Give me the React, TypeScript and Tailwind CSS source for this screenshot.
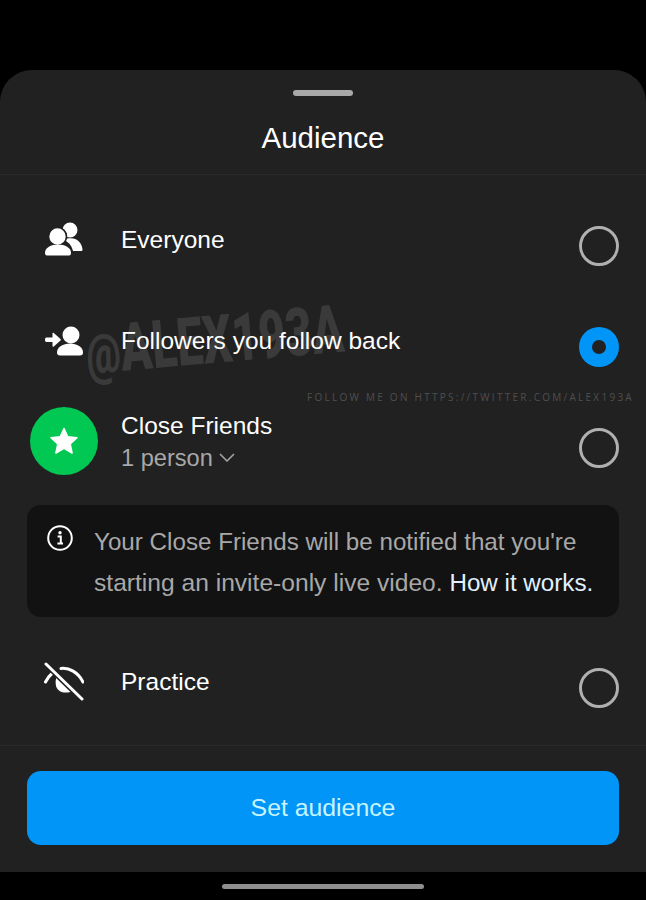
import React from "react";

function RadioMark({ selected }: { selected?: boolean }) {
  if (selected) {
    return (
      <div className="w-10 h-10 rounded-full bg-[#0095f6] flex items-center justify-center shrink-0">
        <div className="w-[14px] h-[14px] rounded-full bg-[#212121]" />
      </div>
    );
  }
  return <div className="w-10 h-10 rounded-full border-[3px] border-[#b0b0b0] shrink-0" />;
}

function EveryoneIcon() {
  return (
    <svg width="38" height="34" viewBox="0 0 38 34" fill="white" className="-translate-y-px">
      <circle cx="25" cy="8" r="7.5" />
      <path d="M22 16.5 C28 15.5 33 17 35.5 21.5 C37.5 25 38 28.5 37 29 L28 29 C27 25 25 21 20 18.5Z" />
      <circle cx="12.5" cy="14.5" r="9" fill="white" stroke="#212121" strokeWidth="1.6" />
      <path d="M0 31 C0 25.5 6 22.5 13 22.5 C20 22.5 26 25.5 26 31 C26 33 25 33.5 23 33.5 L3 33.5 C1 33.5 0 33 0 31 Z" />
    </svg>
  );
}

function FollowBackIcon() {
  return (
    <svg width="38" height="30" viewBox="0 0 38 30" fill="white">
      <circle cx="26" cy="9" r="8.5" />
      <path d="M12 26.5 C12 21 18 17.5 25 17.5 C32 17.5 38 21 38 26.5 C38 28.5 37 29.5 35 29.5 L15 29.5 C13 29.5 12 28.5 12 26.5 Z" />
      <path d="M1.5 11.5 H7.5 V7.5 C7.5 6.8 8.2 6.5 8.8 7 L15.5 13 C16 13.5 16 14 15.5 14.5 L8.8 20.5 C8.2 21 7.5 20.7 7.5 20 V16 H1.5 C0.5 16 0 15.2 0 13.8 C0 12.4 0.5 11.5 1.5 11.5 Z" />
    </svg>
  );
}

function EyeOffIcon() {
  return (
    <svg width="40" height="40" viewBox="0 0 40 40" fill="none" stroke="white" strokeWidth="3" strokeLinecap="round" className="-translate-y-px">
      <path d="M1.5 21 C3 18 5 15 8 12.5" />
      <path d="M17 7.5 C25 6.5 34 11 39 21" />
      <path d="M13 14 L29 30 C22 33 14 32 12 25 C11 21 12 17 13 14 Z" fill="white" stroke="none" />
      <path d="M2 3 L38 38" stroke="#212121" strokeWidth="6" />
      <path d="M2 3 L38 38" strokeWidth="3" />
    </svg>
  );
}

function InfoIcon() {
  return (
    <svg width="26" height="26" viewBox="0 0 26 26" fill="none" stroke="white">
      <circle cx="13" cy="13" r="11.8" strokeWidth="2" />
      <circle cx="13" cy="7.8" r="1.7" fill="white" stroke="none" />
      <path d="M10.6 11.6 H13.8 V18 M10.4 18.6 H16" strokeWidth="2" />
    </svg>
  );
}

function Row({ icon, children, selected }: { icon: React.ReactNode; children: React.ReactNode; selected?: boolean }) {
  return (
    <div className="h-[101px] flex items-center pr-[27px]">
      <div className="w-[121px] shrink-0 flex pl-[45px] -translate-y-[6px]">{icon}</div>
      <div className="flex-1 text-white text-[24.5px] leading-8 -translate-y-[6px]">{children}</div>
      <RadioMark selected={selected} />
    </div>
  );
}

export default function App() {
  return (
    <div className="w-[646px] h-[900px] bg-black flex flex-col relative overflow-hidden font-['Liberation_Sans',sans-serif]">
      {/* watermark stays first in the DOM so the rows paint over it */}
      <div className="absolute left-[86px] top-[316px] text-[#3a3a3a] text-[67px] leading-[70px] font-black origin-left scale-x-[0.69] -rotate-[5deg] whitespace-nowrap font-['Roboto',sans-serif]">
        <span className="text-[56px]">@</span>ALEX193A
      </div>

      <div className="mt-[70px] h-[802px] bg-[#212121] rounded-t-[32px] flex flex-col">
        <div className="h-[105px] shrink-0 border-b border-[#2a2a2a] flex flex-col items-center pt-[20px]">
          <div className="w-[60px] h-[6px] rounded-full bg-[#a8a8a8]" />
          <div className="mt-[22px] text-white text-[29.5px] leading-[40px]">Audience</div>
        </div>

        <div className="flex-1 pt-[20px]">
          <Row icon={<EveryoneIcon />}>Everyone</Row>
          <Row icon={<FollowBackIcon />} selected>
            Followers you follow back
          </Row>
          <div className="h-[101px] flex items-center pr-[27px]">
            <div className="w-[121px] shrink-0 pl-[30px] -translate-y-[7px]">
              <div className="w-[68px] h-[68px] rounded-full bg-[#00c853] flex items-center justify-center">
                <svg width="28" height="28" viewBox="0 0 28 28" fill="white">
                  <path
                    d="M14 1.5 L17.8 9.8 L27 10.8 L20.2 17 L22.1 26 L14 21.4 L5.9 26 L7.8 17 L1 10.8 L10.2 9.8 Z"
                    stroke="white"
                    strokeWidth="1.5"
                    strokeLinejoin="round"
                  />
                </svg>
              </div>
            </div>
            <div className="flex-1 -translate-y-[6px]">
              <div className="text-white text-[24.5px] leading-8">Close Friends</div>
              <div className="flex items-center gap-[6px] text-[#a8a8a8] text-[23.6px] leading-8">
                1 person
                <svg width="16" height="9" viewBox="0 0 16 9" fill="none" stroke="#a8a8a8" strokeWidth="1.5">
                  <path d="M1 1 L8 8 L15 1" />
                </svg>
              </div>
            </div>
            <RadioMark />
          </div>

          <div className="mx-[27px] mt-[7px] h-[112px] rounded-[14px] bg-[#121212] flex pl-[20px] pr-[12px] pt-[20px]">
            <div className="w-[47px] shrink-0">
              <InfoIcon />
            </div>
            <div className="text-[#a8a8a8] text-[24.6px] leading-[41px] -mt-[4px] whitespace-nowrap">
              <span className="text-[24.2px]">Your Close Friends will be notified that you're</span>
              <br />
              starting an invite-only live video. <span className="text-[#e0f1ff] text-[24.2px]">How it works.</span>
            </div>
          </div>

          <div className="mt-[20px]">
            <Row icon={<div className="-ml-[1px]"><EyeOffIcon /></div>}>Practice</Row>
          </div>
        </div>

        <div className="h-[127px] shrink-0 border-t border-[#2a2a2a] px-[27px] pt-[25px]">
          <button className="w-full h-[74px] rounded-[14px] bg-[#0095f6] text-[#c8f4ff] text-[24.8px]">
            Set audience
          </button>
        </div>
      </div>

      <div className="flex-1 flex items-center justify-center">
        <div className="w-[202px] h-[5px] rounded-full bg-[#8e8e8e]" />
      </div>

      <div className="absolute left-[307px] top-[390px] text-[#4f4f4f] text-[10px] leading-[14px] tracking-[0.227em] whitespace-nowrap font-['Open_Sans',sans-serif]">
        FOLLOW ME ON HTTPS://TWITTER.COM/ALEX193A
      </div>
    </div>
  );
}
